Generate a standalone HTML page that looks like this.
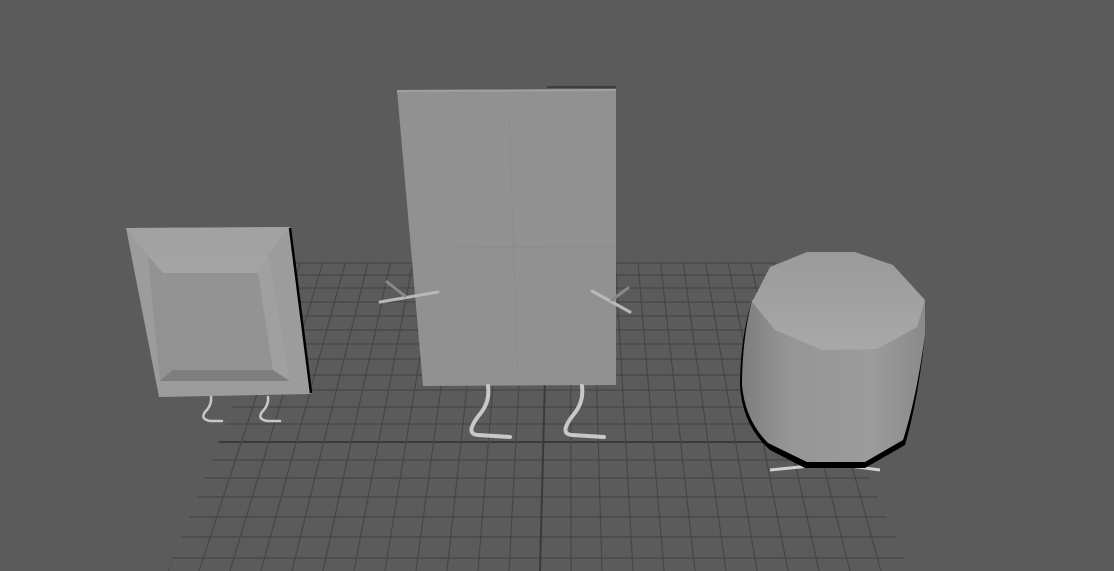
<!DOCTYPE html>
<html><head><meta charset="utf-8"><style>html,body{margin:0;padding:0;background:#5b5b5b;overflow:hidden}svg{display:block}</style></head>
<body>
<svg id="s" width="1114" height="571" viewBox="0 0 1114 571" xmlns="http://www.w3.org/2000/svg">
<defs>
<clipPath id="gc"><polygon points="290,262 775,262 910,571 168,571"/></clipPath>
<linearGradient id="bg1" x1="0" y1="0" x2="1" y2="0">
<stop offset="0" stop-color="#7d7d7d"/><stop offset="0.25" stop-color="#959595"/><stop offset="0.7" stop-color="#9c9c9c"/><stop offset="1" stop-color="#8a8a8a"/></linearGradient>
<linearGradient id="tg" x1="0" y1="0" x2="0" y2="1"><stop offset="0" stop-color="#9a9a9a"/><stop offset="1" stop-color="#a8a8a8"/></linearGradient>
</defs>
<rect width="1114" height="571" fill="#5b5b5b"/>
<g id="grid" clip-path="url(#gc)" stroke="#464646" stroke-width="1.2" fill="none"></g>
<!-- frame -->
<polygon points="126,228 290,227 311,394 159,397" fill="#9c9c9c"/>
<polygon points="126,228 290,227 268,255 148,256" fill="#a2a2a2"/>
<polygon points="148,256 268,255 258,273 163,273" fill="#a4a4a4"/>
<polygon points="148,256 163,273 173,370 160,381" fill="#929292"/>
<polygon points="160,381 173,370 273,370 290,381" fill="#7e7e7e"/>
<polygon points="268,255 290,381 273,370 258,273" fill="#a0a0a0"/>
<polygon points="163,273 258,273 273,370 173,370" fill="#939393"/>
<line x1="290" y1="228" x2="311" y2="393" stroke="#000" stroke-width="2.5"/>
<g stroke="#c8c8c8" stroke-width="2.5" fill="none" stroke-linecap="round">
<path d="M211,397 Q212,405 205,412 Q200,419 210,421 L222,421"/>
<path d="M268,397 Q269,405 262,412 Q257,419 267,421 L280,421"/>
</g>
<!-- tall panel -->
<polygon points="397,90 616,89 616,385 423,386" fill="#919191"/>
<line x1="397" y1="91" x2="616" y2="90" stroke="#a0a0a0" stroke-width="2"/>
<line x1="547" y1="87" x2="616" y2="87" stroke="#222" stroke-width="1"/>
<line x1="509" y1="110" x2="518" y2="380" stroke="#8c8c8c" stroke-width="1"/>
<line x1="411" y1="248" x2="616" y2="247" stroke="#8c8c8c" stroke-width="1"/>
<g stroke="#b8b8b8" stroke-width="3" stroke-linecap="round">
<line x1="380" y1="302" x2="438" y2="292"/><line x1="387" y1="282" x2="405" y2="296" stroke="#888"/>
<line x1="592" y1="291" x2="630" y2="312"/><line x1="612" y1="300" x2="628" y2="288" stroke="#888"/>
</g>
<g stroke="#c8c8c8" stroke-width="4" fill="none" stroke-linecap="round">
<path d="M488,386 Q490,402 480,414 Q464,434 478,435 L510,437"/>
<path d="M582,386 Q584,402 574,414 Q558,434 572,435 L604,437"/>
</g>
<!-- blob -->
<path d="M770,470 L810,466 M850,466 L880,470" stroke="#d0d0d0" stroke-width="3" fill="none"/>
<path d="M752,300 Q740,340 740,385 Q742,425 770,450 L805,468 L865,468 L905,445 Q918,400 925,335 L925,300 Z" fill="#000"/>
<path d="M752,300 Q742,340 742,385 Q745,420 768,443 L807,462 L865,462 L903,440 Q916,400 925,335 L925,300 Z" fill="url(#bg1)"/>
<polygon points="807,252 855,252 893,265 925,300 917,327 877,349 822,350 775,330 752,302 770,267" fill="url(#tg)"/>
</svg>
<script>
var g=document.getElementById('grid'),ns='http://www.w3.org/2000/svg';
function L(a,b,c,d,w,col){var l=document.createElementNS(ns,'line');l.setAttribute('x1',a);l.setAttribute('y1',b);l.setAttribute('x2',c);l.setAttribute('y2',d);if(w)l.setAttribute('stroke-width',w);if(col)l.setAttribute('stroke',col);g.appendChild(l);}
var rows=[263,275,288,302,316,330,344,359,375,390,407,424,442,460,478,497,517,537,558];
rows.forEach(function(y){L(100,y,1000,y,y==442?2:1.2,y==442?'#3a3a3a':null);});
for(var i=-14;i<=14;i++){var xb=548+i*22.5,xf=540+i*31;L(xb,262,xf,571,i==0?2:1.2,i==0?'#3a3a3a':null);}
</script>
</body></html>
